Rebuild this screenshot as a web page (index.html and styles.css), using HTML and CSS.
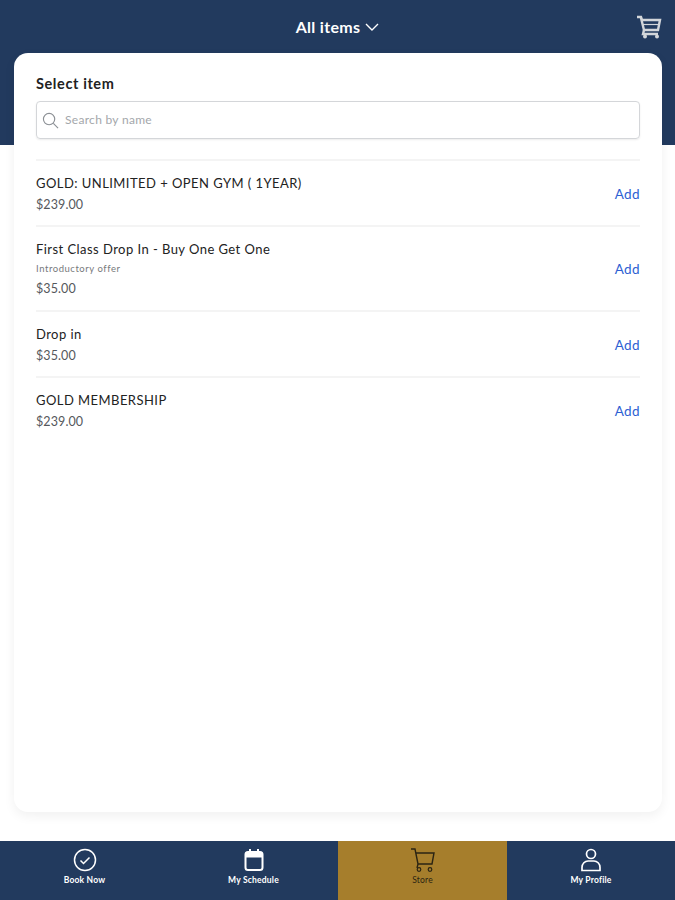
FILE: index.html
```html
<!DOCTYPE html>
<html lang="en">
<head>
  <meta charset="UTF-8">
  <meta name="viewport" content="width=device-width, initial-scale=1.0">
  <title>Store</title>
  <link rel="stylesheet" href="styles.css">
</head>
<body>
<div class="page">
  <div class="band">
    <header class="topbar">
      <div class="topbar-title">All items
        <svg class="chevron" viewBox="0 0 14 8" width="14" height="8"><path d="M1 1l6 6 6-6" fill="none" stroke="#fff" stroke-width="1.4"/></svg>
      </div>
      <svg class="topbar-cart" viewBox="0 0 26 24" width="26" height="24">
        <path d="M1 2h4l1 3h18l-2 10H8L5 3" fill="none" stroke="#d3d6da" stroke-width="2.4"/>
        <path d="M7 9.500h16" stroke="#d3d6da" stroke-width="1.2"/>
        <path d="M8 15l-1 4h15" fill="none" stroke="#d3d6da" stroke-width="2.4"/>
        <circle cx="9" cy="21.500" r="2" fill="#d3d6da"/>
        <circle cx="21" cy="21.500" r="2" fill="#d3d6da"/>
      </svg>
    </header>
  </div>

  <main class="card">
    <h1 class="card-title">Select item</h1>
    <div class="search">
      <svg viewBox="0 0 18 18" width="17" height="17"><circle cx="7.500" cy="7.500" r="6" fill="none" stroke="#8b8f94" stroke-width="1.2"/><path d="M12 12l5 5" stroke="#8b8f94" stroke-width="1.2"/></svg>
      <input type="text" placeholder="Search by name">
    </div>
    <div class="items">
      <div class="item">
        <div>
          <div class="item-name">GOLD: UNLIMITED + OPEN GYM ( 1YEAR)</div>
          <div class="item-price">$239.00</div>
        </div>
        <a class="item-add">Add</a>
      </div>
      <div class="item">
        <div>
          <div class="item-name">First Class Drop In - Buy One Get One</div>
          <div class="item-note">Introductory offer</div>
          <div class="item-price">$35.00</div>
        </div>
        <a class="item-add">Add</a>
      </div>
      <div class="item">
        <div>
          <div class="item-name">Drop in</div>
          <div class="item-price">$35.00</div>
        </div>
        <a class="item-add">Add</a>
      </div>
      <div class="item">
        <div>
          <div class="item-name">GOLD MEMBERSHIP</div>
          <div class="item-price">$239.00</div>
        </div>
        <a class="item-add">Add</a>
      </div>
    </div>
  </main>

  <nav class="tabs">
    <div class="tab">
      <svg viewBox="0 0 24 24" width="24" height="24"><circle cx="12" cy="12" r="10.500" fill="none" stroke="#fff" stroke-width="1.500"/><path d="M7.500 12.500l3 3 6-6" fill="none" stroke="#fff" stroke-width="1.500"/></svg>
      <span>Book Now</span>
    </div>
    <div class="tab">
      <svg viewBox="0 0 24 24" width="24" height="24"><rect x="3.500" y="4" width="17" height="18" rx="2.500" fill="none" stroke="#fff" stroke-width="2"/><path d="M3.500 7h17" stroke="#fff" stroke-width="5"/><path d="M8 1v4M16 1v4" stroke="#fff" stroke-width="2"/></svg>
      <span>My Schedule</span>
    </div>
    <div class="tab tab-active">
      <svg viewBox="0 0 26 24" width="26" height="24"><path d="M1 1h4l3 15h14l2-11H6M8 16l-1 4" fill="none" stroke="#2b2413" stroke-width="1.400"/><circle cx="9" cy="21.500" r="1.800" fill="none" stroke="#2b2413" stroke-width="1.200"/><circle cx="20" cy="21.500" r="1.800" fill="none" stroke="#2b2413" stroke-width="1.200"/></svg>
      <span>Store</span>
    </div>
    <div class="tab">
      <svg viewBox="0 0 24 24" width="24" height="24"><circle cx="12" cy="6" r="4.500" fill="none" stroke="#fff" stroke-width="1.700"/><path d="M3 22.500v-3c0-4 3-6.500 6-6.500h6c3 0 6 2.500 6 6.500v3z" fill="none" stroke="#fff" stroke-width="1.700"/></svg>
      <span>My Profile</span>
    </div>
  </nav>
</div>
</body>
</html>
```

FILE: styles.css
```css
body {
  font-family: 'Lato', sans-serif;
  background: #fff;
  margin: 0;
  color: #222;
}
.page {
  height: 900px;
  display: flex;
  flex-direction: column;
  overflow: hidden;
}
.band {
  height: 145px;
  background: #223a5e;
  flex-shrink: 0;
}
.topbar {
  height: 53px;
  display: flex;
  justify-content: center;
  align-items: center;
  position: relative;
}
.topbar-title {
  color: #fff;
  font-size: 16px;
  font-weight: 700;
  letter-spacing: 0.3px;
  display: flex;
  align-items: center;
  gap: 5px;
}
.topbar-cart {
  position: absolute;
  right: 13px;
  top: 15px;
}
.card {
  flex: 1;
  margin: -92px 13px 29px 14px;
  padding: 22px 22px 0;
  background: #fff;
  border-radius: 14px;
  box-shadow: 0 4px 12px rgba(0,0,0,0.06);
  position: relative;
}
.card-title {
  margin: 0 0 8px;
  font-size: 14.5px;
  line-height: 18px;
  font-weight: 700;
  letter-spacing: 0.6px;
  color: #222;
}
.search {
  height: 38px;
  box-sizing: border-box;
  border: 1px solid #d4d6d9;
  border-radius: 4px;
  box-shadow: 0 1px 2px rgba(0,0,0,0.08);
  display: flex;
  align-items: center;
  gap: 6px;
  padding: 0 5px;
  margin-bottom: 20px;
}
.search input {
  flex: 1;
  border: none;
  outline: none;
  padding: 0 0 2px;
  font-family: inherit;
  font-size: 12px;
  letter-spacing: 0.3px;
}
.search input::placeholder {
  color: #a4a7ab;
}
.items {
  border-top: 2px solid #f4f4f4;
}
.item {
  display: flex;
  justify-content: space-between;
  align-items: center;
  padding: 13px 0 12px;
  border-bottom: 2px solid #f4f4f4;
}
.item:last-child {
  border-bottom: none;
}
.item-name {
  font-size: 13px;
  line-height: 18px;
  letter-spacing: 0.45px;
  color: #222;
}
.item-note {
  font-size: 9.5px;
  line-height: 14px;
  margin-top: 4px;
  letter-spacing: 0.55px;
  color: #77797c;
}
.item-price {
  font-size: 12.5px;
  line-height: 16px;
  margin-top: 5px;
  letter-spacing: 0.1px;
  color: #55585c;
}
.item-note + .item-price {
  margin-bottom: 1px;
}
.item-add {
  font-size: 13.5px;
  color: #2d5fd3;
  letter-spacing: 0.4px;
}
.tabs {
  height: 59px;
  flex-shrink: 0;
  display: grid;
  grid-template-columns: 169px 169px 169px 1fr;
  background: #223a5e;
}
.tab {
  display: flex;
  flex-direction: column;
  align-items: center;
  padding-top: 7px;
  gap: 3px;
  color: #fff;
  font-size: 8.5px;
  font-weight: 700;
  letter-spacing: 0.2px;
}
.tab-active {
  background: #a67e2c;
  color: #2b2413;
  font-weight: 400;
}
```
